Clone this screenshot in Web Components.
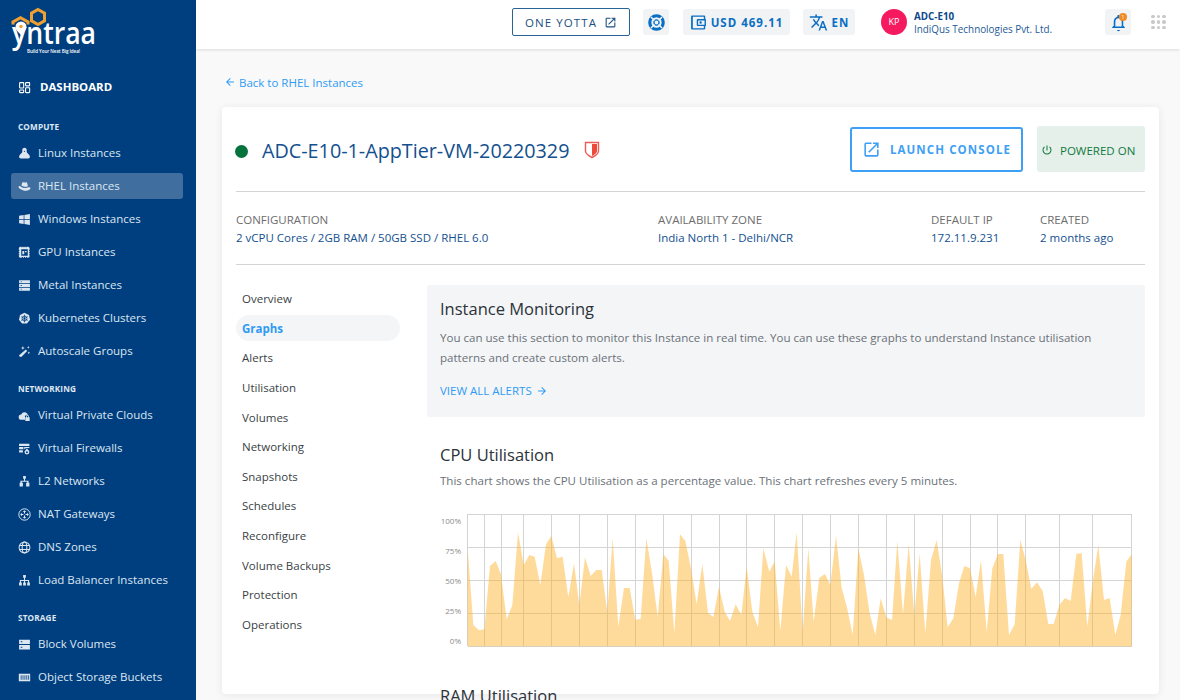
<!DOCTYPE html>
<html lang="en">
<head>
<meta charset="utf-8">
<title>ADC-E10-1-AppTier-VM-20220329</title>
<style>
  html, body { margin: 0; height: 100%; overflow: hidden; background: #f9f9f9; }
  body { font-family: "Open Sans", "Liberation Sans", sans-serif; }
</style>
</head>
<body>
<yn-app>
  <yn-sidebar slot="sidebar">
    <yn-nav-item kind="top" icon="dashboard">DASHBOARD</yn-nav-item>
    <yn-nav-heading>COMPUTE</yn-nav-heading>
    <yn-nav-item icon="linux">Linux Instances</yn-nav-item>
    <yn-nav-item icon="rhel" active>RHEL Instances</yn-nav-item>
    <yn-nav-item icon="windows">Windows Instances</yn-nav-item>
    <yn-nav-item icon="gpu">GPU Instances</yn-nav-item>
    <yn-nav-item icon="metal">Metal Instances</yn-nav-item>
    <yn-nav-item icon="k8s">Kubernetes Clusters</yn-nav-item>
    <yn-nav-item icon="wand">Autoscale Groups</yn-nav-item>
    <yn-nav-heading>NETWORKING</yn-nav-heading>
    <yn-nav-item icon="vpc">Virtual Private Clouds</yn-nav-item>
    <yn-nav-item icon="firewall">Virtual Firewalls</yn-nav-item>
    <yn-nav-item icon="l2">L2 Networks</yn-nav-item>
    <yn-nav-item icon="nat">NAT Gateways</yn-nav-item>
    <yn-nav-item icon="dns">DNS Zones</yn-nav-item>
    <yn-nav-item icon="lb">Load Balancer Instances</yn-nav-item>
    <yn-nav-heading>STORAGE</yn-nav-heading>
    <yn-nav-item icon="block">Block Volumes</yn-nav-item>
    <yn-nav-item icon="bucket">Object Storage Buckets</yn-nav-item>
  </yn-sidebar>
  <yn-topbar slot="topbar"></yn-topbar>
  <yn-breadcrumb>Back to RHEL Instances</yn-breadcrumb>
  <yn-instance-card>
    <yn-detail-tabs slot="tabs"></yn-detail-tabs>
    <yn-monitor-panel></yn-monitor-panel>
    <yn-chart-section heading="CPU Utilisation" note="This chart shows the CPU Utilisation as a percentage value. This chart refreshes every 5 minutes."></yn-chart-section>
    <yn-section-title>RAM Utilisation</yn-section-title>
  </yn-instance-card>
</yn-app>

<script>
const ICONS = {
  dashboard: '<g fill="none" stroke="currentColor" stroke-width="2"><rect x="3" y="3" width="7.500" height="10" rx="1"/><rect x="14" y="3" width="7.500" height="6" rx="1"/><rect x="3" y="16.500" width="7.500" height="5" rx="1"/><rect x="14" y="12.500" width="7.500" height="9" rx="1"/></g>',
  linux: '<path fill="currentColor" d="M12 1.500c-2.600 0-4.200 2-4.200 4.600 0 1.200.3 2 .1 2.900C7.500 11 2 14 2 18c0 2 1.400 3 3 3h14c1.600 0 3-1 3-3 0-4-5.500-7-5.900-9-.2-.9.100-1.700.100-2.900C16.200 3.500 14.600 1.500 12 1.500z"/><path fill="#003f7f" d="M10.500 7.800l1.500-1 1.500 1-1.500 1.200z"/>',
  rhel: '<g transform="translate(0 -3.500) scale(1 1.300)"><path fill="currentColor" d="M8 6.500c1.500-.8 2.500-.3 4-.2 1.800 0 3-.9 4.200-.2 1.300.8 1.600 3.800 2.100 5.400-4.200 1.500-9.500.5-11.800-1 .3-1.500.6-3.300 1.500-4z"/><path fill="currentColor" d="M1 12.500c0-1 .9-1.600 2.500-1.400 3.500 2.700 11 4 16.200 1.800 1.700-.1 3.800.6 3.300 2-.7 2-5.500 3.600-9.500 3.100-5.500-.6-12.500-3.300-12.500-5.500z"/></g>',
  windows: '<path fill="currentColor" d="M2 5l8.500-1.200v7.700H2zM11.800 3.600L22 2v9.500H11.800zM2 12.800h8.500v7.500L2 19.100zM11.800 12.800H22V22l-10.200-1.500z"/>',
  gpu: '<path fill="currentColor" fill-rule="evenodd" d="M4.500 1.500h1.500v1h2v-1h2v1h2v-1h2v1h2v-1h2.500a3 3 0 0 1 3 3V7h-1v2h1v2h-1v2h1v2h-1v2h1v1.500a3 3 0 0 1-3 3H17v-1h-2v1h-2v-1h-2v1H9v-1H7v1H4.500a3 3 0 0 1-3-3V17h1v-2h-1v-2h1v-2h-1V9h1V7h-1V4.500a3 3 0 0 1 3-3zM6 6v12h12V6z"/><path fill="currentColor" d="M8 9h3.500v6H8zM13 9h3v2.500h-3z"/>',
  metal: '<path fill="currentColor" fill-rule="evenodd" d="M2 2.500h20v5.500H2zm3 2v1.500h2V4.500zM2 9.300h20v5.500H2zm3 2v1.500h2v-1.500zM2 16h20v5.500H2zm3 2v1.500h2V18z"/>',
  k8s: '<path fill="currentColor" d="M12 1.500l8.200 3.900 2 8.800-5.600 7.100H7.400l-5.600-7.100 2-8.800z"/><g fill="none" stroke="#003f7f" stroke-width="1.400"><circle cx="12" cy="12" r="4.500"/><path d="M12 5v14M6 8.500l12 7M18 8.500l-12 7"/></g>',
  wand: '<path fill="currentColor" d="M14.500 8.500l2.500 2.500L6 22l-3.500-1-.5-2z"/><path fill="currentColor" d="M9 2l1 2.500L12.500 5.500 10 6.500 9 9 8 6.500 5.500 5.500 8 4.500zM19 2l.8 1.700 1.700.8-1.700.8L19 7l-.8-1.700-1.700-.8 1.700-.8zM20 12l.8 1.700 1.700.8-1.700.8L20 17l-.8-1.700-1.700-.8 1.700-.8z"/>',
  vpc: '<path fill="currentColor" d="M18.500 11.500a6.500 6.500 0 0 0-12.500-1.500A5 5 0 0 0 6.500 20H13v-4.500a3.500 3.500 0 0 1 5.500-4z"/><path fill="currentColor" fill-rule="evenodd" d="M15 15v-1.300a2.500 2.500 0 0 1 5 0V15h1.500v7h-8v-7zm1.300 0h2.400v-1.300a1.200 1.200 0 0 0-2.400 0z"/>',
  firewall: '<path fill="currentColor" d="M2 3h19v4.500H2zM2 9h8v4.500H2zM11.500 9H21v2h-6l-3.500 2.500zM2 15h7v4.500H2z"/><path fill="currentColor" fill-rule="evenodd" d="M16.500 11.500c.5 2 4.500 3.700 4.500 7a4.500 4.500 0 0 1-9 0c0-2.500 3.500-4 4.500-7zm0 5.500a1.800 1.800 0 1 0 0 3.600 1.800 1.800 0 0 0 0-3.600z"/>',
  l2: '<path fill="currentColor" d="M9.500 2h5v5h-1.500v3.500h6.500v4H21V21h-6v-6.500h2v-2H7v2h2V21H3v-6.500h1.500v-4H11V7H9.500z"/>',
  nat: '<circle cx="12" cy="12" r="10.500" fill="none" stroke="currentColor" stroke-width="1.800"/><path fill="currentColor" d="M12 4l3.200 3.200H13V10h-2V7.200H8.800zM12 20l-3.200-3.200H11V14h2v2.800h2.200zM4 12l3.200-3.200V11H10v2H7.200v2.200zM20 12l-3.200 3.200V13H14v-2h2.800V8.800z"/>',
  dns: '<g fill="none" stroke="currentColor" stroke-width="1.900"><circle cx="12" cy="12" r="10"/><ellipse cx="12" cy="12" rx="4.300" ry="10"/><path d="M2.800 8.500h18.400M2.800 15.500h18.400"/></g>',
  lb: '<path fill="currentColor" d="M9.500 2h5v5H13v4h7.500v4.500H22V21h-5v-5.500h1.500V13H13v2.500h1.500V21h-5v-5.500H11V13H5.500v2.500H7V21H2v-5.500h1.500V11H11V7H9.500z"/>',
  block: '<path fill="currentColor" fill-rule="evenodd" d="M2 3h20v8H2zm3 3v2h3V6zM2 13h20v8H2zm3 3v2h3v-2z"/>',
  bucket: '<path fill="currentColor" fill-rule="evenodd" d="M1.500 5h21v14h-21zM5 8v8h1.500V8zm3.500 0v8H10V8zM12 8v8h1.500V8zm3.500 0v8H17V8zM19 8v8h1.500V8z"/>'
};

const UI_ICONS = {
  openNew: '<path fill="currentColor" d="M19 19H5V5h7V3H5a2 2 0 0 0-2 2v14a2 2 0 0 0 2 2h14c1.100 0 2-.9 2-2v-7h-2v7zM14 3v2h3.590l-9.830 9.830 1.410 1.410L19 6.410V10h2V3h-7z"/>',
  translate: '<path fill="currentColor" d="M12.870 15.070l-2.540-2.510.03-.03A17.520 17.520 0 0 0 14.070 6H17V4h-7V2H8v2H1v1.990h11.170C11.500 7.920 10.440 9.750 9 11.350 8.070 10.320 7.300 9.190 6.690 8h-2c.73 1.630 1.730 3.170 2.980 4.560l-5.090 5.020L4 19l5-5 3.110 3.110.76-2.040zM18.500 10h-2L12 22h2l1.120-3h4.750L21 22h2l-4.500-12zm-2.620 7l1.620-4.330L19.120 17h-3.240z"/>',
  power: '<path fill="currentColor" d="M13 3h-2v10h2V3zm4.830 2.170l-1.420 1.420A6.920 6.920 0 0 1 19 12c0 3.870-3.130 7-7 7s-7-3.130-7-7c0-2.270 1.080-4.280 2.750-5.560L6.340 5.030A8.950 8.950 0 0 0 3 12a9 9 0 0 0 18 0c0-2.740-1.230-5.180-3.170-6.830z"/>',
  back: '<path fill="currentColor" d="M20 11H7.830l5.590-5.590L12 4l-8 8 8 8 1.410-1.410L7.830 13H20v-2z"/>',
  forward: '<path fill="currentColor" d="M12 4l-1.410 1.410L16.170 11H4v2h12.170l-5.580 5.590L12 20l8-8z"/>',
  bell: '<path fill="currentColor" d="M12 23c1.100 0 2-.6 2-1.500h-4c0 .9.900 1.500 2 1.500zm6-7v-5c0-3.070-1.630-5.640-4.500-6.320V4c0-.83-.67-1.500-1.500-1.500s-1.500.67-1.500 1.500v.68C7.640 5.360 6 7.920 6 11v5l-2 2v1h16v-1l-2-2zm-2 1H8v-6c0-2.480 1.510-4.500 4-4.500s4 2.020 4 4.500v6z"/>',
  wallet: '<path fill="currentColor" fill-rule="evenodd" d="M3 2h17a1.500 1.500 0 0 1 1.500 1.500V7h-2V4H4v16h15.500v-3h2v3.500A1.500 1.500 0 0 1 20 22H3a1.500 1.500 0 0 1-1.500-1.500v-17A1.500 1.500 0 0 1 3 2zm8 5h11.500v10H11a1.500 1.500 0 0 1-1.500-1.500v-7A1.500 1.500 0 0 1 11 7zm.500 2v6h9V9zm3.500 1.300a1.700 1.700 0 1 1 0 3.400 1.700 1.700 0 0 1 0-3.400z"/>',
  buoy: '<g fill="none" stroke="currentColor"><circle cx="12" cy="12" r="8.500" stroke-width="4"/><circle cx="12" cy="12" r="3.200" stroke-width="1.600"/></g><path stroke="#f1f3f4" stroke-width="2" d="M5 5l4.500 4.500M19 5l-4.500 4.500M5 19l4.500-4.500M19 19l-4.500-4.500"/>'
};

function svgIcon(markup, size) {
  return `<svg width="${size}" height="${size}" viewBox="0 0 24 24" aria-hidden="true">${markup}</svg>`;
}

// shared shape for the small elements: a template string per class
class ShadowElement extends HTMLElement {
  constructor() {
    super();
    this.attachShadow({ mode: 'open' });
    this.shadowRoot.innerHTML = this.render();
  }
}

class YnApp extends ShadowElement {
  render() {
    return `
      <style>
        :host { display: flex; width: 1180px; height: 700px; overflow: hidden; }
        .side { flex: 0 0 196px; }
        .main { flex: 1; min-width: 0; display: flex; flex-direction: column; }
        .content { padding: 25px 21px 0 26px; }
      </style>
      <div class="side"><slot name="sidebar"></slot></div>
      <div class="main">
        <slot name="topbar"></slot>
        <div class="content"><slot></slot></div>
      </div>
    `;
  }
}

class YnSidebar extends ShadowElement {
  render() {
    return `
      <style>
        :host { display: block; height: 700px; background: #003f7f; color: #fff; overflow: hidden; }
        .logo { display: block; height: 74px; }
      </style>
      <svg class="logo" width="196" height="74" viewBox="0 0 196 74">
        <g fill="none" stroke="#f0a030" stroke-width="3">
          <path d="M38 9.500l6.500 3.700v7.600L38 24.500l-6.500-3.700v-7.600z"/>
          <path d="M13 24.500v-2.500l7.500-4.200 7.500 4.200v2.500"/>
        </g>
        <path fill="#fff" d="M21 21.500a5.500 5.500 0 0 1 5.500 5.500c0 3-3 5-5.500 8-2.500-3-5.500-5-5.500-8a5.500 5.500 0 0 1 5.500-5.500z"/>
        <circle cx="21" cy="26.500" r="1.700" fill="#f0a030"/>
        <text x="12" y="44.300" font-family="'Open Sans', sans-serif" font-weight="600" font-size="30" fill="#fff" textLength="84" lengthAdjust="spacingAndGlyphs">yntraa</text>
        <text x="27" y="52.500" font-family="'Open Sans', sans-serif" font-size="4.600" font-weight="600" fill="#fff" textLength="53">Build Your Next Big Idea!</text>
      </svg>
      <slot></slot>
    `;
  }
}

class YnNavItem extends ShadowElement {
  render() {
    const icon = ICONS[this.getAttribute('icon')] || '';
    const isTop = this.getAttribute('kind') === 'top';
    return `
      <style>
        :host { display: flex; align-items: center; height: 26px; margin: 0 13px 7px 11px; padding-left: 7px;
          border-radius: 3px; font-size: 11.500px; line-height: 26px; color: #dce6f1; white-space: nowrap; }
        :host([active]) { background: rgba(255, 255, 255, 0.25); }
        :host([kind="top"]) { font-weight: 700; color: #fff; font-size: 11.450px; margin-bottom: 21px; }
        svg { flex: none; margin-right: ${isTop ? 9 : 7}px; }
      </style>
      ${svgIcon(icon, 13)}<slot></slot>
    `;
  }
}

class YnNavHeading extends ShadowElement {
  render() {
    return `
      <style>
        :host { display: block; margin: 19px 0 7px 18px; font-size: 8.200px; font-weight: 700; line-height: 12px; color: #dfe8f2; letter-spacing: .15px; }
      </style>
      <slot></slot>
    `;
  }
}

class YnTopbar extends ShadowElement {
  render() {
    return `
      <style>
        :host { display: flex; align-items: center; justify-content: flex-end; height: 49px; box-sizing: border-box; flex: none;
          padding: 0 15px 5px 0; background: #fff; box-shadow: 0 1px 3px rgba(0, 0, 0, .12); color: #0a6fc4; }
        .one { display: flex; align-items: center; justify-content: center; gap: 7px; box-sizing: border-box; width: 118px; height: 28px;
          border: 1px solid #2a6496; border-radius: 2px; color: #1d4f80; font-size: 11.500px; letter-spacing: 1.100px; margin-right: 13px; }
        .one svg { color: #1d4f80; }
        .chip { display: flex; align-items: center; justify-content: center; height: 26px; border-radius: 3px; background: #f1f3f4;
          font-size: 11.500px; font-weight: 700; letter-spacing: 1px; gap: 4px; }
        .buoy { width: 26px; margin-right: 14px; }
        .usd { width: 107px; margin-right: 13px; }
        .lang { width: 52px; margin-right: 26px; }
        .avatar { width: 26px; height: 26px; border-radius: 50%; background: #f5195f; color: #fff; font-size: 9px; line-height: 26px; text-align: center; margin-right: 7px; }
        .who { width: 191px; margin-top: 1px; color: #1d5a96; font-size: 9.900px; line-height: 13px; }
        .who b { display: block; color: #0d4a8a; font-size: 9.800px; }
        .bell { position: relative; width: 26px; margin-right: 20px; }
        .badge { position: absolute; top: 4px; right: 4px; width: 8px; height: 8px; border-radius: 50%; background: #f08a24; color: #fff; font-size: 5px; line-height: 8px; text-align: center; font-weight: 400; letter-spacing: 0; }
        .apps { display: grid; grid-template-columns: repeat(3, 3.500px); gap: 2px; width: 14px; }
        .apps i { height: 3.500px; border-radius: 50%; background: #c9c9c9; }
      </style>
      <div class="one">ONE YOTTA ${svgIcon(UI_ICONS.openNew, 13)}</div>
      <div class="chip buoy">${svgIcon(UI_ICONS.buoy, 19)}</div>
      <div class="chip usd">${svgIcon(UI_ICONS.wallet, 17)}<span>USD 469.11</span></div>
      <div class="chip lang">${svgIcon(UI_ICONS.translate, 19)}<span>EN</span></div>
      <div class="avatar">KP</div>
      <div class="who"><b>ADC-E10</b>IndiQus Technologies Pvt. Ltd.</div>
      <div class="chip bell">${svgIcon(UI_ICONS.bell, 19)}<span class="badge">1</span></div>
      <div class="apps">${'<i></i>'.repeat(9)}</div>
    `;
  }
}

class YnBreadcrumb extends ShadowElement {
  render() {
    return `
      <style>
        :host { display: flex; align-items: center; gap: 3px; height: 16px; margin: 0 0 17px 2px; color: #2f9bf4; font-size: 11.500px; }
      </style>
      ${svgIcon(UI_ICONS.back, 12)}<slot></slot>
    `;
  }
}

class YnInstanceCard extends ShadowElement {
  render() {
    return `
      <style>
        :host { display: block; box-sizing: border-box; height: 587px; padding: 19px 14px 0; background: #fff; border-radius: 4px;
          box-shadow: 0 1px 8px rgba(0, 0, 0, .08); }
        .head { display: flex; align-items: center; height: 46px; padding-bottom: 19px; border-bottom: 1px solid #d4d4d4; }
        .dot { width: 13px; height: 13px; border-radius: 50%; background: #04733c; margin: 4px 14px 0 -1px; }
        h1 { margin: 4px 0 0; font-size: 19.750px; font-weight: 400; line-height: 26px; color: #13508f; white-space: nowrap; }
        .shield { margin: 2px auto 0 15px; display: block; }
        .launch { display: flex; align-items: center; justify-content: center; gap: 9px; box-sizing: border-box; width: 173px; height: 45px; margin: 1px 14px 0 0;
          border: 2px solid #3ea0f5; border-radius: 3px; color: #3ea0f5; font-size: 11.500px; font-weight: 700; letter-spacing: 1.100px; }
        .power { display: flex; align-items: center; gap: 7px; box-sizing: border-box; width: 108px; height: 46px; padding: 2px 0 0 4px; border-radius: 3px;
          background: #e5f0ea; color: #12793f; font-size: 11.500px; white-space: nowrap; }
        .meta { display: grid; grid-template-columns: 422px 273px 109px 1fr; padding: 19px 0 17px; border-bottom: 1px solid #d4d4d4; font-size: 11.500px; line-height: 18px; }
        .meta span { display: block; color: #6d6d6d; }
        .meta a { display: block; color: #13508f; }
        .body { display: flex; gap: 27px; margin-top: 20px; }
        .tabs { flex: 0 0 164px; }
        .col { flex: 1; min-width: 0; }
      </style>
      <div class="head">
        <span class="dot"></span>
        <h1>ADC-E10-1-AppTier-VM-20220329</h1>
        <svg class="shield" width="16" height="18" viewBox="0 0 16 18">
          <path fill="#fff" stroke="#ee5b50" stroke-width="1.400" d="M1.500 1.500h13v8.500c0 3-3.500 5-6.500 6.500-3-1.500-6.500-3.500-6.500-6.500z"/>
          <path fill="#ee4a3c" d="M8 3h5v7c0 2.200-2.500 3.700-5 4.900z"/>
        </svg>
        <div class="launch">${svgIcon(UI_ICONS.openNew, 19)}LAUNCH CONSOLE</div>
        <div class="power">${svgIcon(UI_ICONS.power, 12)}POWERED ON</div>
      </div>
      <div class="meta">
        <div><span>CONFIGURATION</span><a>2 vCPU Cores / 2GB RAM / 50GB SSD / RHEL 6.0</a></div>
        <div><span>AVAILABILITY ZONE</span><a>India North 1 - Delhi/NCR</a></div>
        <div><span>DEFAULT IP</span><a>172.11.9.231</a></div>
        <div><span>CREATED</span><a>2 months ago</a></div>
      </div>
      <div class="body">
        <div class="tabs"><slot name="tabs"></slot></div>
        <div class="col"><slot></slot></div>
      </div>
    `;
  }
}

class YnDetailTabs extends ShadowElement {
  render() {
    const tabs = ['Overview', 'Graphs', 'Alerts', 'Utilisation', 'Volumes', 'Networking', 'Snapshots', 'Schedules', 'Reconfigure', 'Volume Backups', 'Protection', 'Operations'];
    return `
      <style>
        :host { display: flex; flex-direction: column; gap: 3.650px; font-size: 11.500px; color: #3a3f45; }
        div { box-sizing: border-box; height: 26px; line-height: 26px; padding: 1px 0 0 6px; border-radius: 13px; }
        .on { background: #f4f5f7; color: #2f9bf4; font-weight: 700; }
      </style>
      ${tabs.map((t) => `<div class="${t === 'Graphs' ? 'on' : ''}">${t}</div>`).join('')}
    `;
  }
}

class YnMonitorPanel extends ShadowElement {
  render() {
    return `
      <style>
        :host { display: block; box-sizing: border-box; height: 132px; padding: 12px 13px 0; background: #f4f5f7; border-radius: 3px; }
        h2 { margin: 0; font-size: 16.500px; font-weight: 400; line-height: 24px; color: #2b323a; }
        p { margin: 7px 0 14px; font-size: 11.550px; line-height: 20px; color: #6b7177; }
        a { display: flex; align-items: center; gap: 4px; color: #2f9bf4; font-size: 11.500px; line-height: 18px; }
      </style>
      <h2>Instance Monitoring</h2>
      <p>You can use this section to monitor this Instance in real time. You can use these graphs to understand Instance utilisation patterns and create custom alerts.</p>
      <a>VIEW ALL ALERTS ${svgIcon(UI_ICONS.forward, 12)}</a>
    `;
  }
}

class YnSectionTitle extends ShadowElement {
  render() {
    return `
      <style>
        :host { display: block; margin: 29px 0 0 13px; font-size: 16.500px; line-height: 24px; color: #2b323a; white-space: nowrap; }
      </style>
      <slot></slot>
    `;
  }
}

// traced from the reference, page coords x3 relative to (430,505)
const CPU_POINTS = [
  113,130, 130,360, 147,376, 163,373, 180,183, 197,168, 213,208, 230,343, 247,300, 264,82,
  281,180, 298,150, 314,155, 331,240, 348,118, 364,93, 381,160, 398,155, 415,277, 432,175,
  448,300, 465,157, 482,213, 499,195, 515,195, 532,320, 548,100, 565,365, 582,249, 599,249,
  616,345, 632,341, 649,100, 666,205, 683,335, 700,148, 716,167, 733,385, 750,88, 766,108,
  783,190, 800,298, 817,177, 834,323, 850,336, 867,245, 884,320, 900,348, 917,298, 934,330,
  950,185, 967,320, 984,367, 1000,130, 1018,200, 1034,168, 1051,378, 1068,180, 1085,215, 1100,82,
  1118,380, 1135,130, 1151,350, 1168,218, 1185,207, 1201,240, 1218,93, 1235,248, 1252,312, 1268,390,
  1285,130, 1302,210, 1319,325, 1336,390, 1352,280, 1369,337, 1386,345, 1402,108, 1419,328, 1436,118,
  1453,330, 1469,145, 1486,385, 1503,165, 1520,105, 1537,215, 1553,367, 1570,340, 1587,235, 1603,183,
  1620,190, 1637,275, 1653,165, 1670,380, 1687,190, 1704,147, 1720,147, 1737,390, 1754,358, 1771,105,
  1787,165, 1804,252, 1821,232, 1838,258, 1855,357, 1871,357, 1888,300, 1905,279, 1922,288, 1939,147,
  1955,144, 1972,365, 1989,225, 2005,120, 2022,285, 2039,279, 2056,390, 2072,330, 2089,170, 2105,148
];
const GRID_X = [113, 163, 214, 280, 364, 448, 532, 616, 700, 784, 867, 950, 1034, 1118, 1202, 1286, 1370, 1453, 1537, 1621, 1703, 1787, 1888, 1988, 2105];
const GRID_Y = [28, 127, 226, 325, 424];
const AXIS_LABELS = [[47, '100%'], [137, '75%'], [228, '50%'], [318, '25%'], [408, '0%']];

class YnChartSection extends ShadowElement {
  render() {
    const px = (v) => (v / 3).toFixed(2);
    const pts = [];
    for (let i = 0; i < CPU_POINTS.length; i += 2) pts.push(`${px(CPU_POINTS[i])},${px(CPU_POINTS[i + 1])}`);
    const area = `${px(113)},${px(424)} ${pts.join(' ')} ${px(2105)},${px(424)}`;
    const vLines = GRID_X.map((x) => `<line x1="${px(x)}" x2="${px(x)}" y1="${px(28)}" y2="${px(424)}"/>`).join('');
    const hLines = GRID_Y.map((y) => `<line x1="${px(113)}" x2="${px(2105)}" y1="${px(y)}" y2="${px(y)}"/>`).join('');
    const labels = AXIS_LABELS.map(([y, t]) => `<text x="31" y="${(y / 3 + 3).toFixed(2)}">${t}</text>`).join('');
    return `
      <style>
        :host { display: block; margin: 26px 0 0 13px; }
        h2 { margin: 0; font-size: 16.500px; font-weight: 400; line-height: 24px; color: #2b323a; }
        p { margin: 5px 0 15px; font-size: 11.550px; line-height: 18px; color: #6b7177; white-space: nowrap; }
        svg { display: block; margin-left: -10px; }
        text { font-size: 8px; fill: #8b8b8b; text-anchor: end; font-family: "Open Sans", sans-serif; }
      </style>
      <h2>${this.getAttribute('heading')}</h2>
      <p>${this.getAttribute('note')}</p>
      <svg width="710" height="150" viewBox="0 0 710 150">
        <g stroke="#d4d4d4" stroke-width="1" shape-rendering="crispEdges">${vLines}${hLines}</g>
        <polygon points="${area}" fill="rgba(253, 180, 45, .48)"/>
        ${labels}
      </svg>
    `;
  }
}

customElements.define('yn-app', YnApp);
customElements.define('yn-sidebar', YnSidebar);
customElements.define('yn-nav-item', YnNavItem);
customElements.define('yn-nav-heading', YnNavHeading);
customElements.define('yn-topbar', YnTopbar);
customElements.define('yn-breadcrumb', YnBreadcrumb);
customElements.define('yn-instance-card', YnInstanceCard);
customElements.define('yn-detail-tabs', YnDetailTabs);
customElements.define('yn-monitor-panel', YnMonitorPanel);
customElements.define('yn-section-title', YnSectionTitle);
customElements.define('yn-chart-section', YnChartSection);
</script>
</body>
</html>
